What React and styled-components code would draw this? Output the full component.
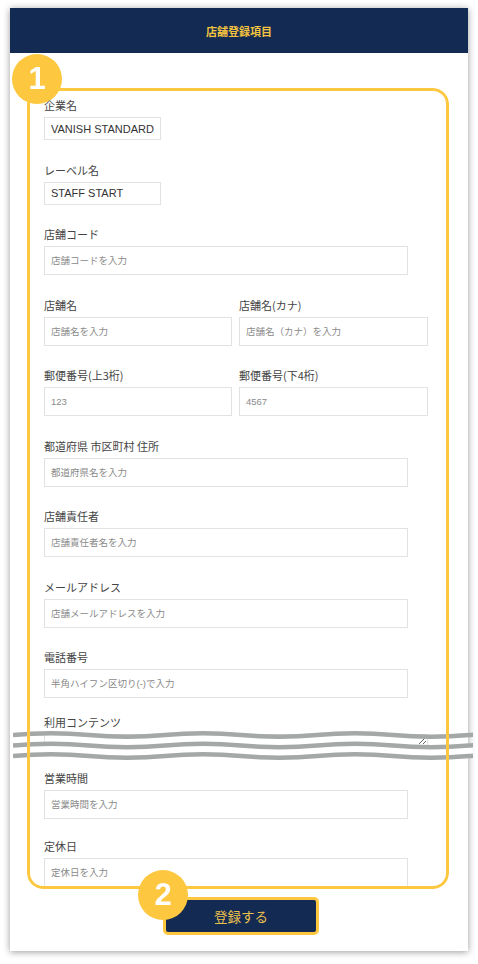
import styled, { createGlobalStyle } from 'styled-components';

const GlobalStyle = createGlobalStyle`
    html, body {
        margin: 0;
        padding: 0;
        background: #ffffff;
    }
    body {
        font-family: "Liberation Sans", "Noto Sans CJK JP", sans-serif;
    }
`;

const Page = styled.div`
    padding: 8px 10px 13px;
`;

const Card = styled.div`
    position: relative;
    width: 458px;
    background: #ffffff;
    box-shadow: 0 1px 7px rgba(0, 0, 0, 0.4);
`;

const Header = styled.div`
    height: 45px;
    background: #132a53;
    display: flex;
    align-items: center;
    justify-content: center;
    color: #f4c33f;
    font-size: 11px;
    font-weight: bold;
    font-family: "Noto Sans CJK JP", sans-serif;
`;

const Body = styled.div`
    position: relative;
    padding: 35px 0 16px;
`;

const Badge = styled.div`
    position: absolute;
    z-index: 3;
    width: 50px;
    height: 50px;
    border-radius: 50%;
    background: #fdc73f;
    color: #ffffff;
    font-family: "Liberation Sans", sans-serif;
    font-weight: bold;
    font-size: 31px;
    display: flex;
    align-items: center;
    justify-content: center;
    left: ${(p) => p.left}px;
    top: ${(p) => p.top}px;
`;

const Frame = styled.div`
    position: relative;
    margin-left: 17px;
    width: 422px;
    height: 801px;
    border-radius: 16px;
    overflow: hidden;
    box-sizing: border-box;
    padding: 9px 0 0 17px;

    &::after {
        content: '';
        position: absolute;
        inset: 0;
        z-index: 2;
        border: 3px solid #fdc73f;
        border-radius: 16px;
        pointer-events: none;
    }
`;

const Group = styled.div`
    display: flex;
    flex-direction: column;
    gap: 4px;
    margin-top: ${(p) => (p.first ? 0 : p.gap ?? 21.5)}px;
`;

const Row = styled.div`
    display: flex;
    gap: 7px;
    margin-top: 21.5px;

    & > ${Group} {
        margin-top: 0;
        width: 188px;
    }
`;

const Label = styled.div`
    font-size: 11px;
    line-height: 16px;
    color: #444;
    font-family: "Noto Sans CJK JP", sans-serif;
`;

const Input = styled.input`
    box-sizing: border-box;
    width: ${(p) => p.w}px;
    height: ${(p) => p.h ?? 29}px;
    border: 1px solid #e2e2e2;
    border-radius: 0;
    padding: 0 6px;
    margin: 0;
    font-family: "Liberation Sans", "Noto Sans CJK JP", sans-serif;
    font-size: ${(p) => (p.h ? 11 : 9.5)}px;
    color: #333;
    outline: none;

    &::placeholder {
        color: #8a8a8a;
    }
`;

const Area = styled.textarea`
    box-sizing: border-box;
    width: 384px;
    height: 12px;
    margin: 0 0 24px;
    border: 1px solid #e2e2e2;
    padding: 0;
    resize: vertical;
    outline: none;
`;

const Wave = styled.svg`
    position: absolute;
    z-index: 1;
    left: 3px;
    top: 721px;
`;

const Footer = styled.div`
    display: flex;
    justify-content: center;
    padding-top: 8px;
`;

const ButtonWrap = styled.div`
    position: relative;
    margin-left: 4px;
`;

const Submit = styled.button`
    box-sizing: border-box;
    width: 156px;
    height: 38px;
    border: 3px solid #fdc73f;
    border-radius: 5px;
    background: #132a53;
    color: #ecc04c;
    font-family: "Noto Sans CJK JP", sans-serif;
    font-size: 13.5px;
    cursor: pointer;
`;

const wavePath = (y) => {
    let d = `M0,${y}`;
    for (let x = 0; x < 460; x += 76) {
        const dir = (x / 76) % 2 === 0 ? -3.5 : 3.5;
        d += ` Q${x + 38},${y + dir} ${x + 76},${y}`;
    }
    return d;
};

const Field = ({ label, placeholder, value, w = 364, h, gap, first }) => (
    <Group first={first} gap={gap}>
        <Label>{label}</Label>
        <Input w={w} h={h} placeholder={placeholder} defaultValue={value} />
    </Group>
);

const App = () => {
    return (
        <Page>
            <GlobalStyle />
            <Card>
                <Header>店舗登録項目</Header>
                <Body>
                    <Badge left={2} top={1}>1</Badge>
                    <Frame>
                        <Field first label="企業名" value="VANISH STANDARD" w={117} h={23} />
                        <Field label="レーベル名" value="STAFF START" w={117} h={23} />
                        <Field label="店舗コード" placeholder="店舗コードを入力" />
                        <Row>
                            <Field label="店舗名" placeholder="店舗名を入力" w={188} />
                            <Field label="店舗名(カナ)" placeholder="店舗名（カナ）を入力" w={189} />
                        </Row>
                        <Row>
                            <Field label="郵便番号(上3桁)" placeholder="123" w={188} />
                            <Field label="郵便番号(下4桁)" placeholder="4567" w={189} />
                        </Row>
                        <Field label="都道府県 市区町村 住所" placeholder="都道府県名を入力" />
                        <Field label="店舗責任者" placeholder="店舗責任者名を入力" />
                        <Field label="メールアドレス" placeholder="店舗メールアドレスを入力" />
                        <Field label="電話番号" placeholder="半角ハイフン区切り(-)で入力" />
                        <Group gap={16}>
                            <Label>利用コンテンツ</Label>
                            <Area />
                        </Group>
                        <Field first label="営業時間" placeholder="営業時間を入力" />
                        <Field label="定休日" placeholder="定休日を入力" gap={19} />
                    </Frame>
                    <Footer>
                        <ButtonWrap>
                            <Badge left={-25} top={-27}>2</Badge>
                            <Submit>登録する</Submit>
                        </ButtonWrap>
                    </Footer>
                </Body>
                <Wave width="460" height="34" viewBox="0 0 460 34">
                    <path d={`${wavePath(16)} L460,27 L0,27 Z`} fill="#ffffff" />
                    <path d={wavePath(6)} stroke="#a4a8a7" strokeWidth="4.5" fill="none" />
                    <path d={wavePath(16.5)} stroke="#a4a8a7" strokeWidth="4.5" fill="none" />
                    <path d={wavePath(27)} stroke="#a4a8a7" strokeWidth="4.5" fill="none" />
                </Wave>
            </Card>
        </Page>
    );
};

export default App;
